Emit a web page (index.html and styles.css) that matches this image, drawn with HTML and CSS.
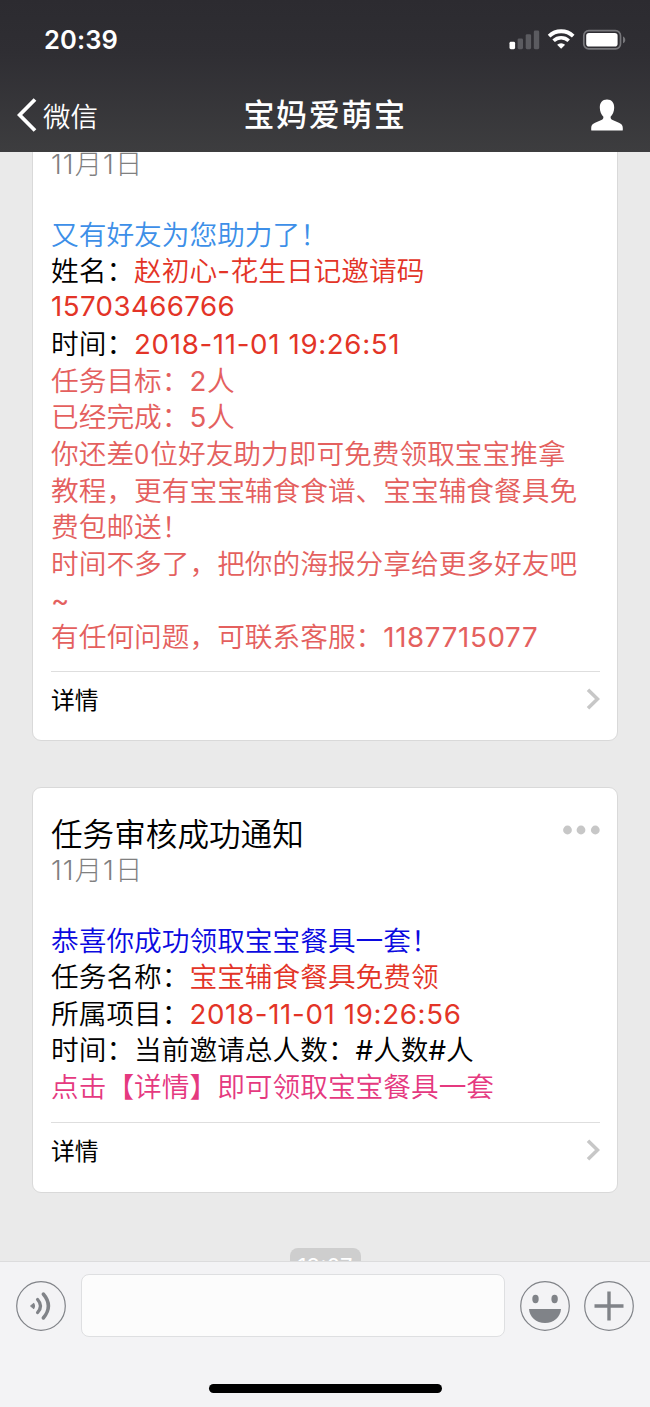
FILE: index.html
```
<!DOCTYPE html>
<html lang="zh-CN">
<head>
<meta charset="utf-8">
<title>宝妈爱萌宝</title>
<link rel="stylesheet" href="styles.css">
</head>
<body>
<div class="screen">
  <header class="top">
    <div class="status">
      <span class="clock">20:39</span>
      <svg class="status-icons" width="117" height="22" viewBox="0 0 117 22">
        <rect x="0.5" y="12.8" width="5.6" height="7.4" rx="1.4" fill="#fff"/>
        <g fill="#5b5b60">
          <rect x="8.6" y="9.4" width="5.4" height="10.8" rx="1.4"/>
          <rect x="16.7" y="5.2" width="5.4" height="15" rx="1.4"/>
          <rect x="24.8" y="1.5" width="5.4" height="18.7" rx="1.4"/>
        </g>
        <g fill="none" stroke="#fff">
          <path d="M40.1 7.1a17.4 17.4 0 0 1 24.1 0" stroke-width="3.8"/>
          <path d="M44.6 11.800a11 11 0 0 1 15.100 0" stroke-width="3.600"/>
        </g>
        <path d="M52.100 19.800l-4-4a5.800 5.800 0 0 1 8 0z" fill="#fff"/>
        <rect x="74.800" y="1.700" width="36.700" height="18.200" rx="5" fill="none" stroke="#77777b" stroke-width="1.700"/>
        <rect x="77.200" y="4" width="31.400" height="13.600" rx="2.800" fill="#fff"/>
        <path d="M114 7.400c3 1.200 3 5.600 0 6.800z" fill="#77777b"/>
      </svg>
    </div>
    <nav class="nav">
      <div class="back">
        <svg width="20" height="34" viewBox="0 0 20 34"><path d="M18 1.500L2.600 17 18 32.500" fill="none" stroke="#fff" stroke-width="3.800"/></svg>
        <span>微信</span>
      </div>
      <h1 class="nav-title">宝妈爱萌宝</h1>
      <svg class="person" width="32" height="32" viewBox="0 0 32 32"><path d="M16 .6c4.700 0 7.300 3.300 7.200 8.100-.1 4-1.600 7-3.600 9 0 1.800.4 2.700 2 3.400l6.300 2.600c2.700 1.100 3.900 2.600 3.900 5.300v1.900c0 .4-.3.7-.7.700H.9c-.4 0-.7-.3-.7-.7V29c0-2.700 1.200-4.200 3.900-5.300l6.300-2.600c1.600-.7 2-1.600 2-3.400-2-2-3.500-5-3.600-9C8.700 3.900 11.300.6 16 .6z" fill="#fff"/></svg>
    </nav>
  </header>

  <main class="chat">
    <article class="card card-cut">
      <p class="date">11月1日</p>
      <div class="body">
        <p class="line azure">又有好友为您助力了！</p>
        <p class="line">姓名：<span class="red">赵初心<span class="num">-</span>花生日记邀请码</span></p>
        <p class="line line-phone red"><span class="num">15703466766</span></p>
        <p class="line">时间：<span class="red num">2018-11-01 19:26:51</span></p>
        <p class="line coral">任务目标：<span class="num">2</span>人</p>
        <p class="line coral">已经完成：<span class="num">5</span>人</p>
        <p class="line coral">你还差<span class="zero">0</span>位好友助力即可免费领取宝宝推拿</p>
        <p class="line coral">教程，更有宝宝辅食食谱、宝宝辅食餐具免</p>
        <p class="line coral">费包邮送！</p>
        <p class="line coral">时间不多了，把你的海报分享给更多好友吧</p>
        <p class="line coral"><span class="num">~</span></p>
        <p class="line coral">有任何问题，可联系客服：<span class="num">1187715077</span></p>
      </div>
      <footer class="more"><span>详情</span>
        <svg width="14" height="22" viewBox="0 0 14 22"><path d="M2 1.800L11.500 11 2 20.200" fill="none" stroke="#c7c7c7" stroke-width="3.600"/></svg>
      </footer>
    </article>

    <article class="card">
      <div class="card-head">
        <h2 class="card-title">任务审核成功通知</h2>
        <svg class="dots" width="38" height="10" viewBox="0 0 38 10" fill="#c7c7c7"><circle cx="5.500" cy="5" r="4.400"/><circle cx="19" cy="5" r="4.400"/><circle cx="33.300" cy="5" r="4.400"/></svg>
      </div>
      <p class="date">11月1日</p>
      <div class="body">
        <p class="line blue">恭喜你成功领取宝宝餐具一套！</p>
        <p class="line">任务名称：<span class="red">宝宝辅食餐具免费领</span></p>
        <p class="line">所属项目：<span class="red num">2018-11-01 19:26:56</span></p>
        <p class="line">时间：当前邀请总人数：<span class="hash">#</span>人数<span class="hash">#</span>人</p>
        <p class="line pink">点击【详情】即可领取宝宝餐具一套</p>
      </div>
      <footer class="more"><span>详情</span>
        <svg width="14" height="22" viewBox="0 0 14 22"><path d="M2 1.800L11.500 11 2 20.200" fill="none" stroke="#c7c7c7" stroke-width="3.600"/></svg>
      </footer>
    </article>

    <div class="stamp">19:07</div>
  </main>

  <footer class="bottom">
    <div class="composer">
      <svg width="50" height="50" viewBox="0 0 50 50" fill="none" stroke="#808388">
        <circle cx="25" cy="25" r="24.300" stroke-width="1.200"/>
        <path d="M14.500 25l3.300-2.800q1.600 2.800 0 5.600z" fill="#808388" stroke-width="1" stroke-linejoin="round"/>
        <path d="M21.600 18.500q5.800 6.500 0 13" stroke-width="3.300" stroke-linecap="round"/>
        <path d="M27.300 13q10.200 12 0 24" stroke-width="3.500" stroke-linecap="round"/>
      </svg>
      <div class="field"></div>
      <svg class="smile" width="50" height="50" viewBox="0 0 50 50" fill="#808388">
        <circle cx="25" cy="25" r="24.300" fill="none" stroke="#808388" stroke-width="1.200"/>
        <ellipse cx="15.500" cy="18" rx="3.200" ry="4.200"/><ellipse cx="34.600" cy="18" rx="3.200" ry="4.200"/>
        <path d="M9 28h32c-.5 8-7.200 14-16 14S9.500 36 9 28z"/>
      </svg>
      <svg class="plus" width="50" height="50" viewBox="0 0 50 50" fill="none" stroke="#808388">
        <circle cx="25" cy="25" r="24.300" stroke-width="1.200"/>
        <path d="M10.500 25h29M25 10.500v29" stroke-width="3.400"/>
      </svg>
    </div>
    <div class="home-bar"></div>
  </footer>
</div>
</body>
</html>
```

FILE: styles.css
```
* { box-sizing: border-box; }
body, p, h1, h2 { margin: 0; }
body { font-family: "Noto Sans CJK SC", sans-serif; color: #000; }
svg { display: block; flex: none; }

.screen {
  width: 650px;
  height: 1407px;
  display: flex;
  flex-direction: column;
  overflow: hidden;
  background: #eaeaea;
}

.top {
  flex: none;
  height: 152px;
  color: #fff;
  background: linear-gradient(#2c2b30, #2f2e33 35%, #3d3d3f);
}
.status {
  height: 77px;
  padding: 29px 24px 0 44px;
  display: flex;
  justify-content: space-between;
  align-items: flex-start;
}
.clock {
  font: 600 25.5px/22px Inter, sans-serif;
  letter-spacing: 0.1px;
}
.nav {
  height: 75px;
  padding: 0 27px 0 27px;
  display: grid;
  grid-template-columns: 1fr auto 1fr;
  align-items: center;
}
.back {
  margin-left: -10px;
  display: flex;
  align-items: center;
  gap: 6px;
  font-size: 27.5px;
  line-height: 38px;
  font-weight: 350;
}
.nav-title {
  margin-top: -4px;
  font-size: 31px;
  line-height: 40px;
  font-weight: 500;
  letter-spacing: 1.6px;
}
.person { justify-self: end; }

.chat {
  flex: none;
  height: 1109px;
  padding: 0 32px;
  overflow: hidden;
  display: flex;
  flex-direction: column;
}
.card {
  flex: none;
  height: 406px;
  margin-top: 46px;
  padding: 26px 17px 0 18px;
  border: 1px solid #d9d9d9;
  border-radius: 9px;
  background: #fff;
}
.card-cut {
  height: 609px;
  margin-top: -20px;
  padding-top: 12px;
}
.card-head {
  height: 37px;
  display: flex;
  justify-content: space-between;
}
.card-title {
  font-size: 31.6px;
  line-height: 36px;
  font-weight: 350;
}
.dots { margin-top: 11px; }
.date {
  height: 37px;
  font-family: Inter, "Noto Sans CJK SC", sans-serif;
  font-size: 27.3px;
  line-height: 39px;
  font-weight: 300;
  letter-spacing: 1.1px;
  color: #808080;
}
.body { margin-top: 32.5px; }
.line {
  height: 36.6px;
  font-size: 27.7px;
  line-height: 36.6px;
  font-weight: 350;
  white-space: nowrap;
}
.line-phone {
  line-height: 32px;
}
.num {
  font-family: Inter, "Noto Sans CJK SC", sans-serif;
  font-weight: 400;
  letter-spacing: 0.65px;
}
.line-phone .num { letter-spacing: 0.4px; }
.zero { letter-spacing: 1px; }
.hash { font-family: Inter, sans-serif; font-weight: 400; }
.azure { color: #3d8fe8; }
.red { color: #e33427; }
.coral { color: #e4605e; }
.blue { color: #0b09e0; }
.pink { color: #e5397f; }
.more {
  margin-top: 17px;
  padding: 9px 0 0;
  border-top: 1px solid #dedede;
  display: flex;
  justify-content: space-between;
  align-items: center;
  font-size: 23.8px;
  line-height: 36px;
}
.card:not(.card-cut) .more { margin-top: 19px; }

.stamp {
  flex: none;
  width: 71px;
  height: 36px;
  margin: 55px auto 0;
  border-radius: 8px;
  background: #cecece;
  color: #fff;
  text-align: center;
  font: 22px/36px Inter, sans-serif;
}

.bottom {
  flex: 1;
  border-top: 1px solid #dcdcdd;
  background: #f3f3f5;
}
.composer {
  padding: 12px 16px 0;
  display: flex;
  align-items: center;
}
.field {
  flex: none;
  width: 424px;
  height: 63px;
  margin: 0 15px 0 15px;
  border: 1px solid #dedfe1;
  border-radius: 8px;
  background: #fcfcfc;
}
.plus { margin-left: 14px; }
.home-bar {
  width: 233px;
  height: 9px;
  margin: 47px auto 0;
  border-radius: 5px;
  background: #000;
}
```
